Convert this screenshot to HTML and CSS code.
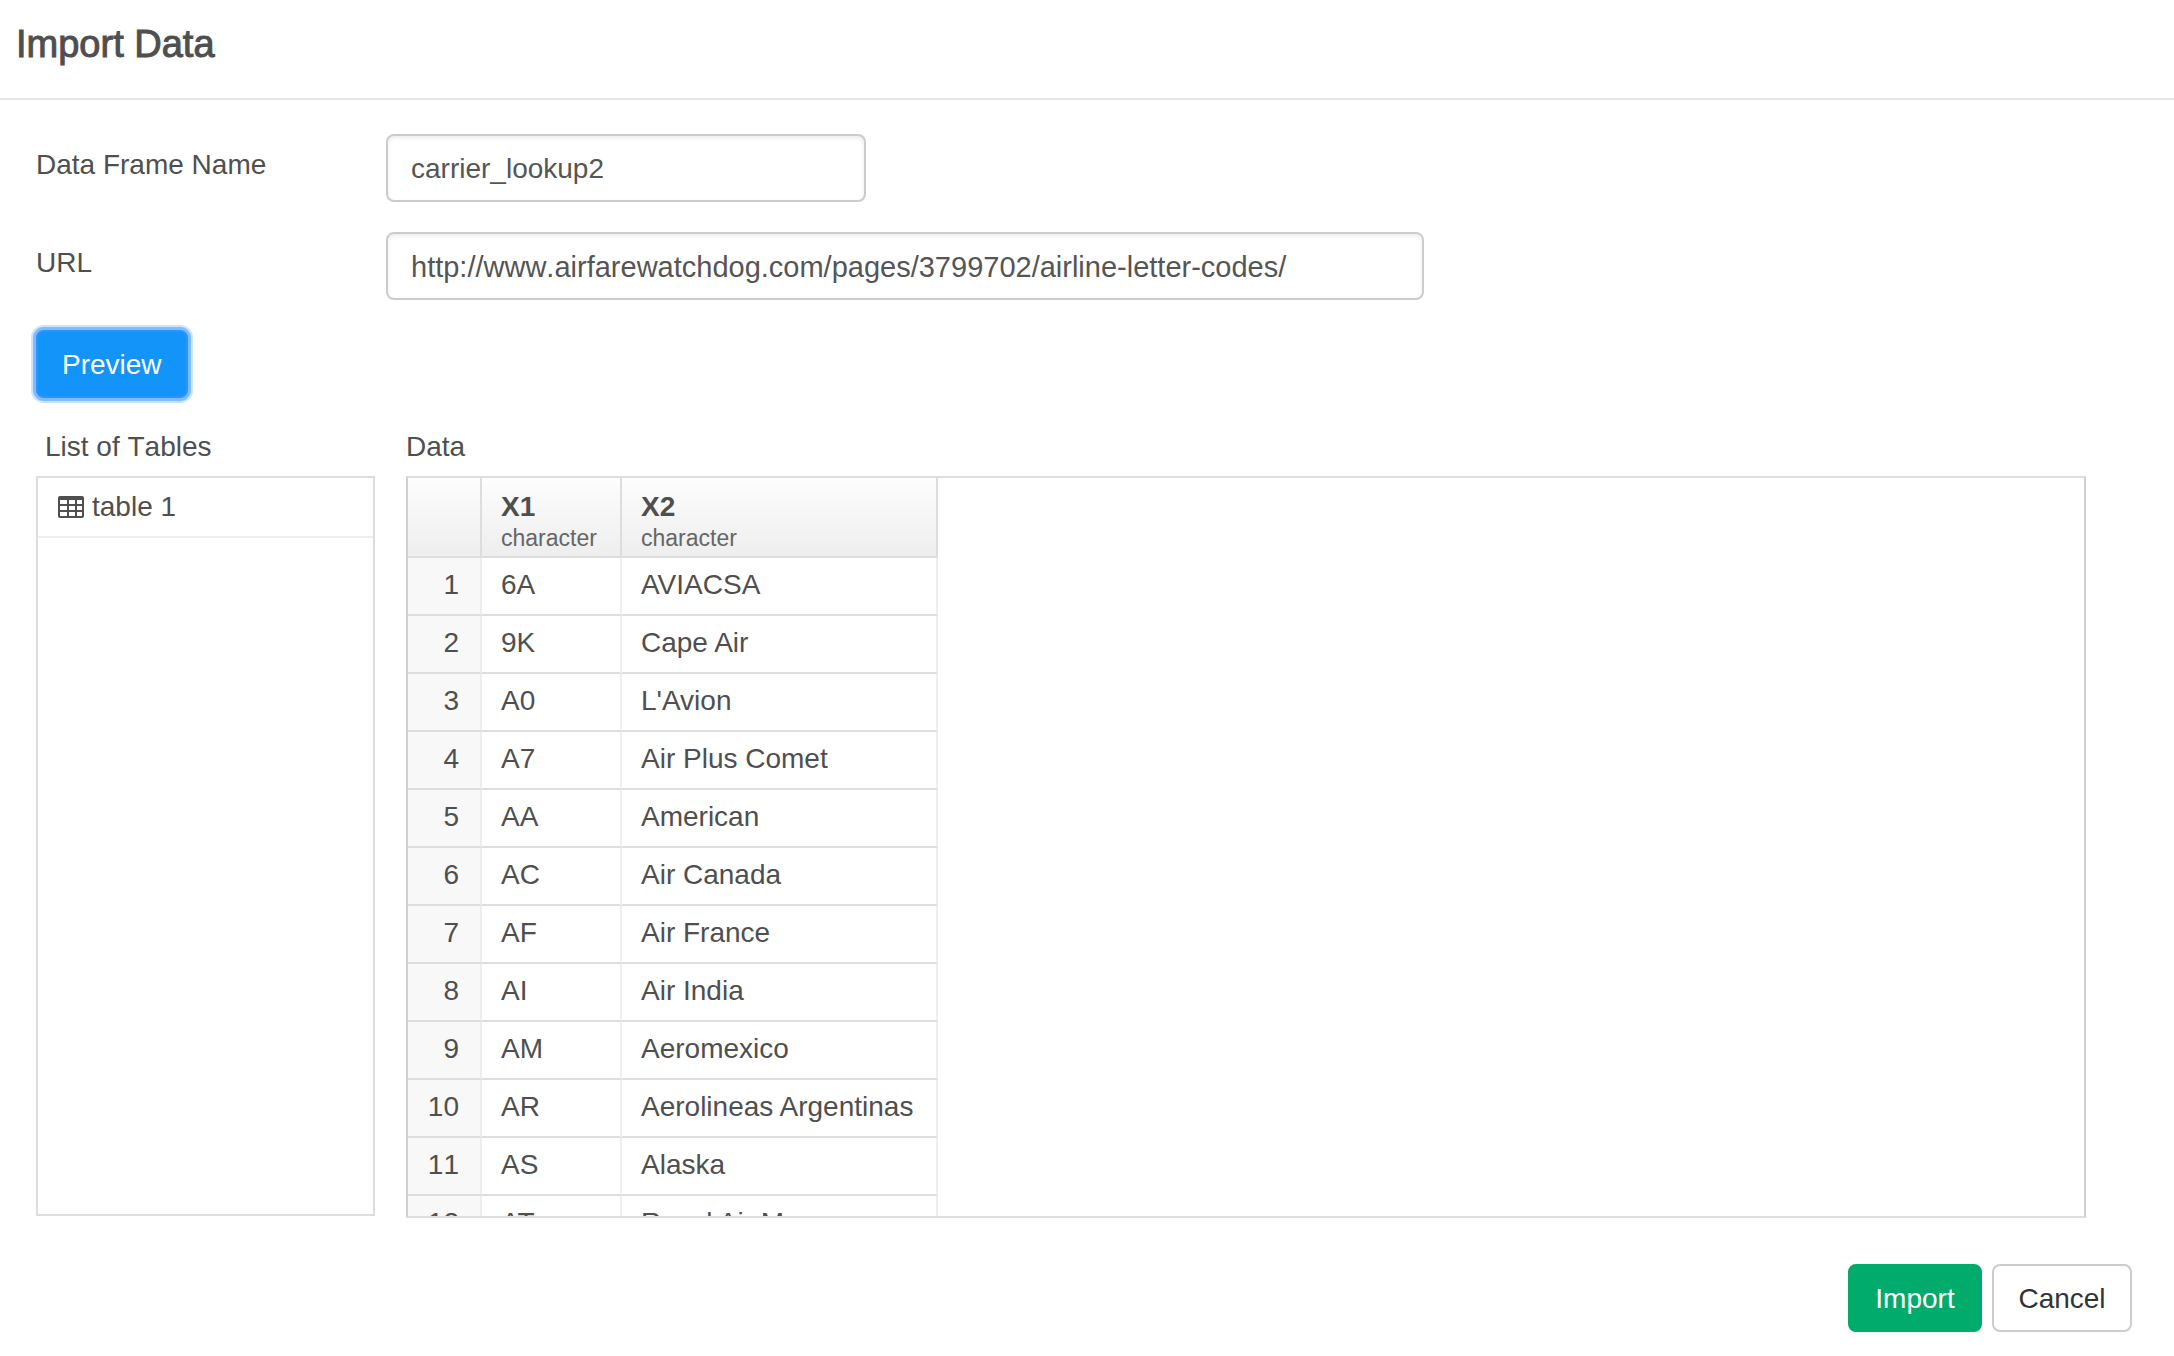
FILE: index.html
```html
<!DOCTYPE html>
<html lang="en">
<head>
<meta charset="utf-8">
<title>Import Data</title>
<link rel="stylesheet" href="styles.css">
</head>
<body>
<form class="dialog">
  <header class="dialog-header">
    <h1 class="dialog-title">Import Data</h1>
  </header>
  <main class="dialog-body">
    <div class="field">
      <label class="field-label" for="frame-name">Data Frame Name</label>
      <input class="text-input name-input" id="frame-name" type="text" value="carrier_lookup2">
    </div>
    <div class="field">
      <label class="field-label" for="url">URL</label>
      <input class="text-input url-input" id="url" type="text" value="http://www.airfarewatchdog.com/pages/3799702/airline-letter-codes/">
    </div>
    <button class="btn btn-preview" type="button">Preview</button>
    <div class="panels">
      <section class="panel tables-panel">
        <h2 class="panel-title tables-title">List of Tables</h2>
        <ul class="panel-box table-list">
          <li class="table-item">
            <svg class="table-icon" viewBox="0 0 26 22" aria-hidden="true">
              <path fill="currentColor" fill-rule="evenodd" d="M2 0H24Q26 0 26 2V20Q26 22 24 22H2Q0 22 0 20V2Q0 0 2 0ZM2 4V8H9V4ZM11 4V8H17V4ZM19 4V8H24V4ZM2 10V14H9V10ZM11 10V14H17V10ZM19 10V14H24V10ZM2 16V20H9V16ZM11 16V20H17V16ZM19 16V20H24V16Z"/>
            </svg>
            <span>table 1</span>
          </li>
        </ul>
      </section>
      <section class="panel data-panel">
        <h2 class="panel-title">Data</h2>
        <div class="panel-box data-box">
          <table class="grid">
            <thead>
              <tr>
                <th class="row-number"></th>
                <th class="code">X1<span class="type">character</span></th>
                <th class="airline">X2<span class="type">character</span></th>
              </tr>
            </thead>
            <tbody>
              <tr><td class="row-number">1</td><td>6A</td><td>AVIACSA</td></tr>
              <tr><td class="row-number">2</td><td>9K</td><td>Cape Air</td></tr>
              <tr><td class="row-number">3</td><td>A0</td><td>L'Avion</td></tr>
              <tr><td class="row-number">4</td><td>A7</td><td>Air Plus Comet</td></tr>
              <tr><td class="row-number">5</td><td>AA</td><td>American</td></tr>
              <tr><td class="row-number">6</td><td>AC</td><td>Air Canada</td></tr>
              <tr><td class="row-number">7</td><td>AF</td><td>Air France</td></tr>
              <tr><td class="row-number">8</td><td>AI</td><td>Air India</td></tr>
              <tr><td class="row-number">9</td><td>AM</td><td>Aeromexico</td></tr>
              <tr><td class="row-number">10</td><td>AR</td><td>Aerolineas Argentinas</td></tr>
              <tr><td class="row-number">11</td><td>AS</td><td>Alaska</td></tr>
              <tr><td class="row-number">12</td><td>AT</td><td>Royal Air Maroc</td></tr>
            </tbody>
          </table>
        </div>
      </section>
    </div>
  </main>
  <footer class="dialog-footer">
    <button class="btn btn-import" type="submit">Import</button>
    <button class="btn btn-cancel" type="button">Cancel</button>
  </footer>
</form>
</body>
</html>
```
FILE: styles.css
```css
* {
  box-sizing: border-box;
}

body {
  margin: 0;
  background: #fff;
  color: #4f4f4f;
  font: 28px/40px "Liberation Sans", Arial, sans-serif;
}

.dialog {
  display: flex;
  flex-direction: column;
  height: 100vh;
}

.dialog-header {
  padding: 20px 16px 30px;
  border-bottom: 2px solid #e5e5e5;
}

/* Medium weight: the regular face thickened by a hairline stroke. */
.dialog-title {
  margin: 0;
  font-size: 38px;
  line-height: 48px;
  font-weight: normal;
  -webkit-text-stroke: 1px currentColor;
}

.dialog-body {
  flex: 1;
  min-height: 0;
  display: flex;
  flex-direction: column;
  padding: 34px 88px 0 36px;
}

.field {
  display: flex;
  align-items: flex-start;
  margin-bottom: 30px;
}

.field-label {
  width: 350px;
  padding-top: 11px;
}

.text-input {
  height: 68px;
  padding: 2px 23px 0;
  border: 2px solid #ccc;
  border-radius: 8px;
  background: #fff;
  box-shadow: inset 0 2px 4px rgba(0, 0, 0, 0.08);
  color: #555;
  font: inherit;
  font-kerning: none;
}

.name-input {
  width: 480px;
}

.url-input {
  width: 1038px;
  font-size: 29px;
}

.btn {
  height: 68px;
  padding: 2px 24px 0;
  border: 2px solid transparent;
  border-radius: 8px;
  font: inherit;
  color: #fff;
}

.btn-preview {
  align-self: flex-start;
  border-color: #2a93fc;
  background: #1294f8;
  box-shadow: 0 0 0 3px #80bcfd, 0 0 0 5px #cbe3fe;
}

.btn-import {
  min-width: 134px;
  border-color: #00ab6b;
  background: #00ab6b;
}

.btn-cancel {
  min-width: 140px;
  border-color: #ccc;
  background: #fff;
  color: #333;
}

.panels {
  flex: 1;
  min-height: 0;
  display: flex;
  gap: 31px;
  margin-top: 29px;
}

.panel {
  display: flex;
  flex-direction: column;
}

.tables-panel {
  width: 339px;
}

.data-panel {
  flex: 1;
}

.panel-title {
  margin: 0 0 9px;
  font-size: 28px;
  line-height: 40px;
  font-weight: normal;
  font-kerning: none;
}

.tables-title {
  padding-left: 9px;
}

.panel-box {
  flex: 1;
  min-height: 0;
  overflow: hidden;
  border: 2px solid #ddd;
}

.table-list {
  margin: 0 0 2px;
  padding: 0;
  list-style: none;
}

.table-item {
  display: flex;
  align-items: center;
  gap: 8px;
  padding: 9px 20px;
  border-bottom: 2px solid #eee;
}

.table-icon {
  width: 26px;
  height: 22px;
}

.data-box {
  border-left-color: #d0d0d0;
  border-right-color: #d0d0d0;
}

.grid {
  border-collapse: separate;
  border-spacing: 0;
}

.grid th {
  height: 80px;
  padding: 9px 19px 0;
  border-right: 2px solid #ddd;
  border-bottom: 2px solid #ddd;
  background: linear-gradient(#fdfdfd, #eee);
  text-align: left;
  vertical-align: top;
  line-height: 40px;
}

.grid .type {
  display: block;
  margin-top: -4px;
  font-size: 23px;
  line-height: 30px;
  font-weight: normal;
  color: #666;
}

.grid td {
  height: 58px;
  padding: 0 19px 2px;
  border-right: 2px solid #eee;
  border-bottom: 2px solid #ddd;
}

.grid .row-number {
  width: 74px;
  padding-right: 21px;
  text-align: right;
  font-kerning: none;
}

.grid .code {
  width: 140px;
}

.grid .airline {
  width: 316px;
}

.grid td.row-number {
  background: #f8f8f8;
}

.dialog-footer {
  display: flex;
  justify-content: flex-end;
  gap: 10px;
  padding: 46px 42px 24px;
}
```
